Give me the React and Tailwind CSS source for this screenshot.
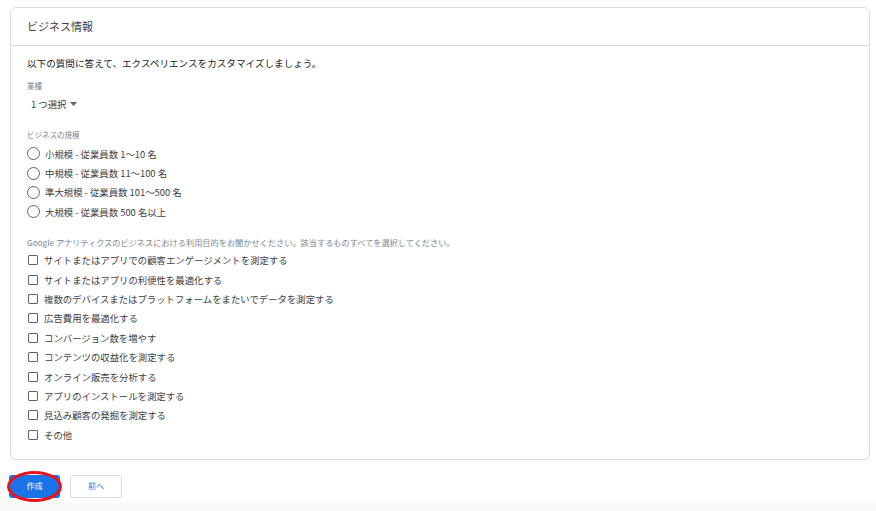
import React from "react";

const radios = [
  "小規模 - 従業員数 1～10 名",
  "中規模 - 従業員数 11～100 名",
  "準大規模 - 従業員数 101～500 名",
  "大規模 - 従業員数 500 名以上",
];

const checks = [
  "サイトまたはアプリでの顧客エンゲージメントを測定する",
  "サイトまたはアプリの利便性を最適化する",
  "複数のデバイスまたはプラットフォームをまたいでデータを測定する",
  "広告費用を最適化する",
  "コンバージョン数を増やす",
  "コンテンツの収益化を測定する",
  "オンライン販売を分析する",
  "アプリのインストールを測定する",
  "見込み顧客の発掘を測定する",
  "その他",
];

export default function App() {
  return (
    <div
      className="w-[876px] h-[511px] bg-white flex flex-col overflow-hidden text-[#3c4043]"
      style={{ fontFamily: '"Noto Sans CJK JP", "Noto Sans", sans-serif' }}
    >
      <div className="pl-[10px] pr-[6px] pt-[7px]">
        <div className="border border-[#dadce0] rounded-[6px] h-[453px] flex flex-col">
          <div className="h-[38px] border-b border-[#dadce0] flex items-center pl-[16px] text-[11px] text-[#3c4043]">
            ビジネス情報
          </div>
          <div className="flex flex-col pl-[16px] pt-[9px]">
            <div className="h-[16px] flex items-center text-[9.6px] text-[#202124]">
              以下の質問に答えて、エクスペリエンスをカスタマイズしましょう。
            </div>
            <div className="h-[14px] mt-[8px] flex items-center text-[7.5px] text-[#80868b]">
              業種
            </div>
            <div className="h-[16px] mt-[3px] pl-[4px] flex items-center text-[9.4px] text-[#3c4043] gap-[4px]">
              <span>1 つ選択</span>
              <svg width="7" height="4" viewBox="0 0 7 4">
                <path d="M0 0 L7 0 L3.5 4 Z" fill="#5f6368" />
              </svg>
            </div>
            <div className="h-[14px] mt-[16px] flex items-center text-[7.5px] text-[#80868b]">
              ビジネスの規模
            </div>
            <div className="flex flex-col mt-[2px]">
              {radios.map((r) => (
                <div key={r} className="h-[19.4px] flex items-center">
                  <span className="w-[13px] h-[13px] rounded-full border border-[#5f6368] box-border" />
                  <span className="ml-[5px] text-[9.4px] text-[#3c4043]">{r}</span>
                </div>
              ))}
            </div>
            <div className="h-[14px] mt-[14px] flex items-center text-[8.2px] text-[#80868b]">
              Google アナリティクスのビジネスにおける利用目的をお聞かせください。該当するものすべてを選択してください。
            </div>
            <div className="flex flex-col mt-[1px]">
              {checks.map((c) => (
                <div key={c} className="h-[19.4px] flex items-center">
                  <span className="w-[10px] h-[10px] ml-[1px] border border-[#5f6368] rounded-[1px] box-border" />
                  <span className="ml-[6px] text-[9.4px] text-[#3c4043]">{c}</span>
                </div>
              ))}
            </div>
          </div>
        </div>
      </div>
      <div className="flex items-center pl-[9px] mt-[14px] gap-[10px] h-[24px]">
        <div className="relative">
          <button className="w-[51px] h-[23px] bg-[#1a73e8] rounded-[3px] text-white text-[8px] flex items-center justify-center">
            作成
          </button>
          <span className="absolute left-[-2px] top-[-4px] w-[55px] h-[31px] rounded-[50%] border-[3px] border-[#e8141c] pointer-events-none" />
        </div>
        <button className="w-[52px] h-[23px] border border-[#dadce0] rounded-[3px] bg-white text-[#1a73e8] text-[8px] flex items-center justify-center">
          前へ
        </button>
      </div>
      <div className="mt-auto h-[8px] bg-[#f8f9fa]" />
    </div>
  );
}
